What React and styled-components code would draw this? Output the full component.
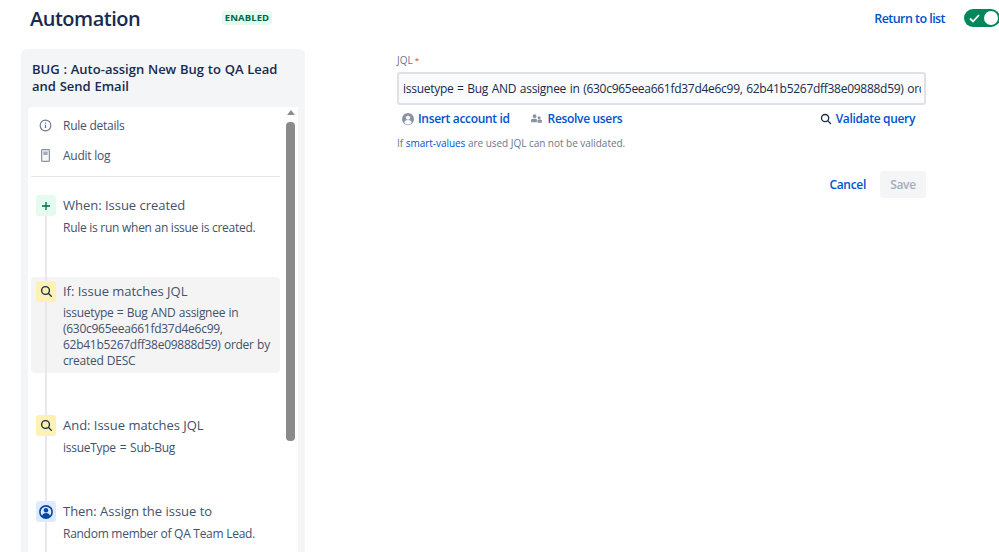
import React from "react";
import styled, { createGlobalStyle } from "styled-components";

const Global = createGlobalStyle`
  html, body { margin: 0; padding: 0; background: #fff; height: 552px; overflow: hidden; }
  body { font-family: "Open Sans", "Noto Sans", "Liberation Sans", sans-serif; color: #172b4d; }
`;
const Page = styled.div`width: 999px; height: 552px; overflow: hidden; display: flex; flex-direction: column;`;
const Header = styled.header`height: 49px; flex: none; display: flex; align-items: flex-start; padding-left: 30px;`;
const Title = styled.h1`margin: 5px 0 0; width: 192px; font-size: 20px; line-height: 27px; font-weight: 600; letter-spacing: -.5px; color: #172b4d;`;
const Lozenge = styled.span`margin-top: 11px; width: 50px; height: 14px; box-sizing: border-box; background: #e3fcef; color: #006644; border-radius: 3px; font-size: 9.5px; line-height: 14px; font-weight: 700; text-align: center; letter-spacing: .1px;`;
const HeaderRight = styled.div`margin-left: auto; display: flex; align-items: flex-start; gap: 19px; margin-right: -1px;`;
const ReturnLink = styled.a`margin-top: 10px; font-size: 12.5px; line-height: 18px; font-weight: 600; letter-spacing: -.55px; color: #0052cc;`;
const Toggle = styled.span`margin-top: 9px; width: 36px; height: 18px; border-radius: 9px; background: #00875a; display: flex; align-items: center; justify-content: space-between; padding: 0 2px 0 5px; box-sizing: border-box; color: #fff;`;
const Knob = styled.span`width: 14px; height: 14px; border-radius: 50%; background: #fff;`;
const Body = styled.div`flex: 1; min-height: 0; display: flex; padding-left: 21px; gap: 92px;`;
const Sidebar = styled.aside`width: 284px; background: #f4f5f7; border-radius: 6px 6px 0 0; padding: 12px 7px 0; box-sizing: border-box; display: flex; flex-direction: column; min-height: 0;`;
const RuleName = styled.h2`margin: 0 4px 12px; font-size: 13px; line-height: 17px; font-weight: 600; word-spacing: .4px; color: #172b4d;`;
const Panel = styled.div`flex: 1; min-height: 0; background: #fff; border-radius: 4px 0 0 0; display: flex; overflow: hidden;`;
const PanelContent = styled.div`width: 249px; margin-left: 3px; flex: none;`;
const NavItem = styled.div`display: flex; align-items: center; gap: 11px; height: 30px; padding-left: 7px; font-size: 12px; letter-spacing: -.25px; color: #42526e;`;
const NavList = styled.div`padding-top: 3px; padding-bottom: 6px; border-bottom: 1px solid #e6e8ee; margin-bottom: 18px;`;
const NavIcon = styled.span`width: 14px; display: flex; justify-content: center; color: #6b778c;`;
const Step = styled.div`position: relative; display: flex; gap: 7px; padding: ${p => p.$pt}px 5px 0; height: ${p => p.$h}px; box-sizing: border-box; background: ${p => p.$active ? "#f4f4f4" : "transparent"}; border-radius: 4px;
  &::before { content: ""; position: absolute; left: 14px; width: 2px; top: 0; bottom: ${p => p.$last ? "-100px" : "0"}; background: #e6e8ee; }`;
const StepIcon = styled.span`position: relative; z-index: 1; flex: none; width: 20px; height: 21px; border-radius: 3px; background: ${p => p.$bg}; color: ${p => p.$fg}; display: flex; align-items: center; justify-content: center;`;
const StepText = styled.div`min-width: 0;`;
const StepTitle = styled.div`font-size: 13px; line-height: 20px; letter-spacing: -.02px; color: #42526e;`;
const StepDesc = styled.div`margin-top: ${p => p.$mt}px; font-size: 12px; line-height: 16px; letter-spacing: -.27px; word-spacing: ${p => p.$ws || 0}px; color: #42526e;`;
const Scrollbar = styled.div`flex: none; width: 15px; position: relative; margin-left: 4px;`;
const ArrowUp = styled.span`position: absolute; top: 3px; left: 3px; border-left: 4px solid transparent; border-right: 4px solid transparent; border-bottom: 5px solid #8c8c8c;`;
const Thumb = styled.span`position: absolute; top: 15px; left: 2px; width: 9px; height: 319px; border-radius: 4px; background: #8a8a8a;`;
const Form = styled.section`width: 529px; padding-top: 4px;`;
const Label = styled.label`display: block; font-size: 10px; line-height: 13px; font-weight: 500; color: #6b778c; span { color: #de350b; margin-left: 2px; font-size: 8px; vertical-align: 1px; }`;
const JqlInput = styled.div`margin-top: 5px; height: 33px; box-sizing: border-box; border: 2px solid #dfe1e6; border-radius: 3px; background: #fafbfc; padding: 0 0 0 4px; font-size: 12px; line-height: 30px; letter-spacing: -.28px; word-spacing: .8px; color: #172b4d; white-space: nowrap; overflow: hidden; position: relative;
  &::after { content: ""; position: absolute; top: 0; right: 0; width: 3px; height: 100%; background: #fafbfc; }`;
const LinkRow = styled.div`display: flex; align-items: center; height: 17px; margin-top: 5px; padding: 0 11px 0 5px;`;
const ActionLink = styled.a`display: inline-flex; align-items: center; gap: ${p => p.$gap || 4}px; font-size: 12px; line-height: 17px; font-weight: 600; letter-spacing: -.33px; color: #0052cc; margin-right: ${p => p.$mr || 0}px; margin-left: ${p => p.$auto ? "auto" : 0};`;
const Help = styled.p`margin: 9px 0 0; font-size: 10px; line-height: 14px; letter-spacing: -.03px; color: #6b778c; a { color: #0052cc; }`;
const Actions = styled.div`display: flex; justify-content: flex-end; align-items: center; gap: 14px; margin-top: 21px;`;
const Cancel = styled.button`border: 0; background: none; padding: 0; font: 600 12px "Open Sans", sans-serif; letter-spacing: -.3px; color: #0052cc;`;
const Save = styled.button`border: 0; width: 46px; height: 27px; border-radius: 3px; background: #f4f5f7; color: #a5adba; font: 600 12px "Open Sans", sans-serif; letter-spacing: -.3px; padding: 0;`;

const Search = ({ size = 13, color = "#172b4d" }) => (
  <svg width={size} height={size} viewBox="0 0 16 16" fill="none" stroke={color} strokeWidth="1.7" strokeLinecap="round"><circle cx="6.8" cy="6.8" r="4.8" /><path d="M10.5 10.5 14 14" /></svg>
);
const Info = () => (
  <svg width="13" height="13" viewBox="0 0 16 16" fill="none" stroke="currentColor" strokeWidth="1.4"><circle cx="8" cy="8" r="6.6" /><path d="M8 7.2v4M8 4.4v1.400" strokeWidth="1.6" /></svg>
);
const Doc = () => (
  <svg width="9" height="13" viewBox="0 0 9 13"><rect x=".6" y=".6" width="7.800" height="11.800" rx=".8" fill="#f4f5f7" stroke="#8993a4" strokeWidth="1.200" /><path d="M2.300 2.500h4.400v3.500H2.300z" fill="#a5adba" /></svg>
);
const RingPerson = () => (
  <svg width="14" height="14" viewBox="0 0 16 16"><circle cx="8" cy="8" r="7" fill="#deebff" stroke="#0747a6" strokeWidth="1.800" /><circle cx="8" cy="6" r="2.600" fill="#0747a6" /><path d="M3.300 13c.5-3 2.400-4 4.700-4s4.200 1 4.700 4c-1.300 1.200-2.900 1.800-4.700 1.800S4.600 14.200 3.300 13Z" fill="#0747a6" /></svg>
);
const SolidPerson = () => (
  <svg width="12" height="12" viewBox="0 0 16 16"><circle cx="8" cy="8" r="8" fill="#8993a4" /><circle cx="8" cy="6.300" r="2.800" fill="#fff" /><path d="M3 13c.8-2.600 2.600-3.600 5-3.600s4.200 1 5 3.600A6.800 6.800 0 0 1 3 13Z" fill="#fff" /></svg>
);
const People = () => (
  <svg width="11" height="10" viewBox="0 0 13 12" fill="#8993a4"><circle cx="4.200" cy="2.600" r="2.200" /><circle cx="9.600" cy="4.400" r="1.800" /><path d="M0 6.600c1-1.400 6.600-1.400 7 0v3.200H0zM7.800 7.300c1-.9 4.400-.9 5.200 0v3.200H7.800z" /></svg>
);

export default function App() {
  return (
    <Page>
      <Global />
      <Header>
        <Title>Automation</Title>
        <Lozenge>ENABLED</Lozenge>
        <HeaderRight>
          <ReturnLink>Return to list</ReturnLink>
          <Toggle>
            <svg width="11" height="9" viewBox="0 0 11 9" fill="none" stroke="#fff" strokeWidth="1.800"><path d="m1 4.500 3 3 6-6.500" /></svg>
            <Knob />
          </Toggle>
        </HeaderRight>
      </Header>
      <Body>
        <Sidebar>
          <RuleName>BUG : Auto-assign New Bug to QA Lead and Send Email</RuleName>
          <Panel>
            <PanelContent>
              <NavList>
                <NavItem><NavIcon><Info /></NavIcon>Rule details</NavItem>
                <NavItem><NavIcon><Doc /></NavIcon>Audit log</NavItem>
              </NavList>
              <Step $h={82} $pt={0}>
                <StepIcon $bg="#e3fcef" $fg="#006644">
                  <svg width="8" height="8" viewBox="0 0 8 8" stroke="currentColor" strokeWidth="1.300"><path d="M4 0v8M0 4h8" /></svg>
                </StepIcon>
                <StepText>
                  <StepTitle>When: Issue created</StepTitle>
                  <StepDesc $mt={5}>Rule is run when an issue is created.</StepDesc>
                </StepText>
              </Step>
              <Step $h={96} $pt={4} $active>
                <StepIcon $bg="#fff0b3" $fg="#172b4d"><Search /></StepIcon>
                <StepText>
                  <StepTitle>If: Issue matches JQL</StepTitle>
                  <StepDesc $mt={4} $ws={.5}>issuetype = Bug AND assignee in (630c965eea661fd37d4e6c99, 62b41b5267dff38e09888d59) order by created DESC</StepDesc>
                </StepText>
              </Step>
              <Step $h={86} $pt={42}>
                <StepIcon $bg="#fff0b3" $fg="#172b4d"><Search /></StepIcon>
                <StepText>
                  <StepTitle>And: Issue matches JQL</StepTitle>
                  <StepDesc $mt={5} $ws={1}>issueType = Sub-Bug</StepDesc>
                </StepText>
              </Step>
              <Step $h={90} $pt={42} $last>
                <StepIcon $bg="#deebff" $fg="#0747a6"><RingPerson /></StepIcon>
                <StepText>
                  <StepTitle>Then: Assign the issue to</StepTitle>
                  <StepDesc $mt={5}>Random member of QA Team Lead.</StepDesc>
                </StepText>
              </Step>
            </PanelContent>
            <Scrollbar><ArrowUp /><Thumb /></Scrollbar>
          </Panel>
        </Sidebar>
        <Form>
          <Label>JQL<span>*</span></Label>
          <JqlInput>issuetype = Bug AND assignee in (630c965eea661fd37d4e6c99, 62b41b5267dff38e09888d59) order by created DESC</JqlInput>
          <LinkRow>
            <ActionLink $mr={21}><SolidPerson />Insert account id</ActionLink>
            <ActionLink $gap={6}><People />Resolve users</ActionLink>
            <ActionLink $auto><Search size={12} />Validate query</ActionLink>
          </LinkRow>
          <Help>If <a>smart-values</a> are used JQL can not be validated.</Help>
          <Actions>
            <Cancel>Cancel</Cancel>
            <Save>Save</Save>
          </Actions>
        </Form>
      </Body>
    </Page>
  );
}
